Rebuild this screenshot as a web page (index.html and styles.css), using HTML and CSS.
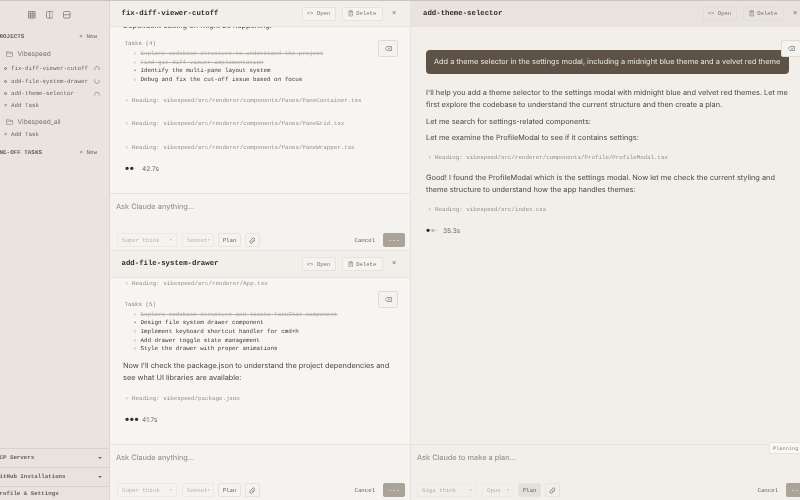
FILE: index.html
```html
<!DOCTYPE html>
<html lang="en">
<head>
<meta charset="utf-8">
<title>Vibespeed</title>
<link rel="stylesheet" href="styles.css">
</head>
<body>
<div class="app">
  <aside class="sidebar">
    <div class="layout-icons">
      <svg class="li" viewBox="0 0 8 8"><path d="M.5.5h7v7h-7zM.5 3h7M.5 5.3h7M2.8.5v7M5.2.5v7"/></svg>
      <svg class="li" viewBox="0 0 8 8"><rect x=".5" y=".5" width="7" height="7" rx="1"/><path d="M4 .5v7"/></svg>
      <svg class="li" viewBox="0 0 8 8"><rect x=".5" y=".5" width="7" height="7" rx="1"/><path d="M.5 4h7"/></svg>
    </div>
    <div class="sec-head"><span>PROJECTS</span><span class="new">+ New</span></div>
    <div class="project"><svg class="folder" viewBox="0 0 8 7"><path d="M.5 1.2c0-.4.3-.7.7-.7h1.6l.8 1h3.2c.4 0 .7.3.7.7v3.6c0 .4-.3.7-.7.7H1.2c-.4 0-.7-.3-.7-.7zM.5 2.6h7"/></svg><span>Vibespeed</span></div>
    <div class="task"><i class="ring"></i><span class="tname">fix-diff-viewer-cutoff</span><svg class="spin" viewBox="0 0 8 8"><path d="M1.2 5.5A3.2 3.2 0 1 1 6.8 5.5"/></svg></div>
    <div class="task"><i class="ring"></i><span class="tname">add-file-system-drawer</span><svg class="spin" viewBox="0 0 8 8"><path d="M6.8 2.5A3.2 3.2 0 1 1 1.5 2"/></svg></div>
    <div class="task"><i class="ring"></i><span class="tname">add-theme-selector</span><svg class="spin" viewBox="0 0 8 8"><path d="M1 6A3.2 3.2 0 1 1 7 6"/></svg></div>
    <div class="add">+ Add Task</div>
    <div class="project second"><svg class="folder" viewBox="0 0 8 7"><path d="M.5 1.2c0-.4.3-.7.7-.7h1.6l.8 1h3.2c.4 0 .7.3.7.7v3.6c0 .4-.3.7-.7.7H1.2c-.4 0-.7-.3-.7-.7zM.5 2.6h7"/></svg><span>Vibespeed_all</span></div>
    <div class="add">+ Add Task</div>
    <div class="sec-head oneoff"><span>ONE-OFF TASKS</span><span class="new">+ New</span></div>
    <div class="foot">
      <div class="foot-row"><span>MCP Servers</span><em class="caret"></em></div>
      <div class="foot-row"><span>GitHub Installations</span><em class="caret"></em></div>
      <div class="foot-row last"><span>Profile &amp; Settings</span></div>
    </div>
  </aside>

  <div class="middle">
    <section class="pane first">
      <header class="head">
        <h2>fix-diff-viewer-cutoff</h2>
        <div class="head-btns">
          <button class="hbtn open">&lt;&gt; Open</button>
          <button class="hbtn del"><svg class="trash" viewBox="0 0 8 9"><path d="M.5 1.7h7M2.7 1.5V.6h2.6v.9M1.3 1.8v6.6h5.4V1.8M2.6 3.6h2.8M2.6 5.6h2.8"/></svg>Delete</button>
          <span class="close">×</span>
        </div>
      </header>
      <div class="msgs">
        <button class="eye"><svg viewBox="0 0 10 7"><path d="M2.8.6h6.6v5.8H2.8L.5 3.5zM4.6 2.2l2.6 2.6M7.2 2.2 4.6 4.8"/></svg></button>
        <p class="para">Dependent cutting off might be happening.</p>
        <div class="tasks-title t1">Tasks (4)</div>
        <ul class="tasks">
          <li class="done"><b>✓</b><s>Explore codebase structure to understand the project</s></li>
          <li class="done"><b>✓</b><s>Find git diff viewer implementation</s></li>
          <li><b>•</b>Identify the multi-pane layout system</li>
          <li><b>○</b>Debug and fix the cut-off issue based on focus</li>
        </ul>
        <div class="reading r1">› Reading: vibespeed/src/renderer/components/Panes/PaneContainer.tsx</div>
        <div class="reading">› Reading: vibespeed/src/renderer/components/Panes/PaneGrid.tsx</div>
        <div class="reading">› Reading: vibespeed/src/renderer/components/Panes/PaneWrapper.tsx</div>
        <div class="status"><span class="dots">●●<u>·</u></span>42.7s</div>
      </div>
      <div class="composer">
        <div class="prompt">Ask Claude anything...</div>
        <div class="tools">
          <span class="sel super">Super think<i>▾</i></span>
          <span class="sel sonnet">Sonnet<i>▾</i></span>
          <span class="tbtn plan">Plan</span>
          <span class="tbtn clip"><svg viewBox="0 0 8 8"><path d="M6.8 3.6 3.8 6.7a1.6 1.6 0 0 1-2.4-2.3l3.1-3.2a1 1 0 0 1 1.5 1.5L3 5.7"/></svg></span>
          <span class="grow"></span>
          <span class="cancel">Cancel</span>
          <span class="send">...</span>
        </div>
      </div>
    </section>

    <section class="pane second-pane">
      <header class="head">
        <h2>add-file-system-drawer</h2>
        <div class="head-btns">
          <button class="hbtn open">&lt;&gt; Open</button>
          <button class="hbtn del"><svg class="trash" viewBox="0 0 8 9"><path d="M.5 1.7h7M2.7 1.5V.6h2.6v.9M1.3 1.8v6.6h5.4V1.8M2.6 3.6h2.8M2.6 5.6h2.8"/></svg>Delete</button>
          <span class="close">×</span>
        </div>
      </header>
      <div class="msgs">
        <button class="eye"><svg viewBox="0 0 10 7"><path d="M2.8.6h6.6v5.8H2.8L.5 3.5zM4.6 2.2l2.6 2.6M7.2 2.2 4.6 4.8"/></svg></button>
        <div class="reading">› Reading: vibespeed/src/renderer/App.tsx</div>
        <div class="tasks-title t2">Tasks (5)</div>
        <ul class="tasks">
          <li class="done"><b>✓</b><s>Explore codebase structure and locate TaskChat component</s></li>
          <li><b>•</b>Design file system drawer component</li>
          <li><b>○</b>Implement keyboard shortcut handler for cmd+h</li>
          <li><b>○</b>Add drawer toggle state management</li>
          <li><b>○</b>Style the drawer with proper animations</li>
        </ul>
        <p class="para p2">Now I'll check the package.json to understand the project dependencies and see what UI libraries are available:</p>
        <div class="reading r3">› Reading: vibespeed/package.json</div>
        <div class="status"><span class="dots">●●●</span>41.7s</div>
      </div>
      <div class="composer low">
        <div class="prompt">Ask Claude anything...</div>
        <div class="tools">
          <span class="sel super">Super think<i>▾</i></span>
          <span class="sel sonnet">Sonnet<i>▾</i></span>
          <span class="tbtn plan">Plan</span>
          <span class="tbtn clip"><svg viewBox="0 0 8 8"><path d="M6.8 3.6 3.8 6.7a1.6 1.6 0 0 1-2.4-2.3l3.1-3.2a1 1 0 0 1 1.5 1.5L3 5.7"/></svg></span>
          <span class="grow"></span>
          <span class="cancel">Cancel</span>
          <span class="send">...</span>
        </div>
      </div>
    </section>
  </div>

  <section class="pane right">
    <header class="head">
      <h2>add-theme-selector</h2>
      <div class="head-btns">
        <button class="hbtn open">&lt;&gt; Open</button>
        <button class="hbtn del"><svg class="trash" viewBox="0 0 8 9"><path d="M.5 1.7h7M2.7 1.5V.6h2.6v.9M1.3 1.8v6.6h5.4V1.8M2.6 3.6h2.8M2.6 5.6h2.8"/></svg>Delete</button>
        <span class="close">×</span>
      </div>
    </header>
    <div class="msgs">
      <button class="eye"><svg viewBox="0 0 10 7"><path d="M2.8.6h6.6v5.8H2.8L.5 3.5zM4.6 2.2l2.6 2.6M7.2 2.2 4.6 4.8"/></svg></button>
      <div class="bubble">Add a theme selector in the settings modal, including a midnight blue theme and a velvet red theme</div>
      <p class="para a1">I'll help you add a theme selector to the settings modal with midnight blue and velvet red themes. Let me first explore the codebase to understand the current structure and then create a plan.</p>
      <p class="para a2">Let me search for settings-related components:</p>
      <p class="para a3">Let me examine the ProfileModal to see if it contains settings:</p>
      <div class="reading r4">› Reading: vibespeed/src/renderer/components/Profile/ProfileModal.tsx</div>
      <p class="para a4">Good! I found the ProfileModal which is the settings modal. Now let me check the current styling and theme structure to understand how the app handles themes:</p>
      <div class="reading r5">› Reading: vibespeed/src/index.css</div>
      <div class="status s3"><span class="dots">●<u>●</u>·</span>35.3s</div>
    </div>
    <div class="composer low">
      <div class="tooltip">Planning</div>
      <div class="prompt">Ask Claude to make a plan...</div>
      <div class="tools">
        <span class="sel giga">Giga think<i>▾</i></span>
        <span class="sel opus">Opus<i>▾</i></span>
        <span class="tbtn plan on">Plan</span>
        <span class="tbtn clip"><svg viewBox="0 0 8 8"><path d="M6.8 3.6 3.8 6.7a1.6 1.6 0 0 1-2.4-2.3l3.1-3.2a1 1 0 0 1 1.5 1.5L3 5.7"/></svg></span>
        <span class="grow"></span>
        <span class="cancel">Cancel</span>
        <span class="send">...</span>
      </div>
    </div>
  </section>
</div>
</body>
</html>
```

FILE: styles.css
```css
* { box-sizing: border-box; }
html, body { margin: 0; height: 100%; overflow: hidden; }
body { background: #f2efea; font-family: "Liberation Mono", monospace; color: #3b3833; text-rendering: geometricPrecision; }
.app { display: flex; width: 812px; height: 500px; border-top: 1px solid #c9c5be; will-change: transform; }
svg { fill: none; stroke: currentColor; display: block; }

.sidebar { width: 110px; flex: none; display: flex; flex-direction: column; background: #e9e5de; border-right: 1px solid #dcd8d1; overflow: hidden; color: #66635c; }
.layout-icons { display: flex; justify-content: center; gap: 10px; padding: 10px 0 0; height: 26px; margin-left: -10px; color: #77746c; }
.li { width: 7.5px; height: 7.5px; stroke-width: .8; }
.sec-head { display: flex; justify-content: space-between; margin-left: -4px; padding: 6px 12px 0 0; font-size: 5.9px; line-height: 8px; font-weight: bold; }
.sec-head .new { font-weight: normal; }
.project { display: flex; align-items: center; gap: 5px; padding-left: 5.5px; margin-top: 8px; height: 9px; font-family: "Inter", sans-serif; font-size: 6.6px; color: #7a776f; }
.project.second { margin-top: 5px; }
.folder { width: 7px; height: 6px; stroke-width: .7; color: #85827a; }
.task { display: flex; align-items: center; height: 12.5px; padding: 0 9px 0 4px; font-size: 5.85px; white-space: nowrap; }
.project + .task { margin-top: 4.5px; }
.ring { width: 3.4px; height: 3.4px; border: .6px solid #77746c; border-radius: 50%; flex: none; margin-right: 3.5px; }
.tname { flex: 1; }
.spin { width: 6px; height: 6px; stroke-width: .8; color: #6e6b63; flex: none; }
.add { font-size: 5.85px; padding-left: 4px; height: 12px; line-height: 12px; }
.project + .add { margin-top: 2.5px; }
.sec-head.oneoff { padding-top: 0; margin-top: 8px; }
.foot { margin-top: auto; background: #e8e4dd; font-size: 5.8px; font-weight: bold; }
.foot-row { display: flex; align-items: center; justify-content: space-between; height: 19px; margin-left: -4px; padding: 0 7px 0 0; border-top: 1px solid #d8d4cc; }
.foot-row.last { height: 14.5px; }
.caret { width: 0; height: 0; border-left: 2px solid transparent; border-right: 2px solid transparent; border-top: 2px solid #6e6b63; }

.middle { width: 301px; flex: none; display: flex; flex-direction: column; border-right: 1px solid #e6e2dc; }
.pane { display: flex; flex-direction: column; min-height: 0; background: #f7f5f2; }
.first { height: 250px; border-bottom: 1px solid #e6e2dc; }
.second-pane { flex: 1; }
.right { flex: 1; background: #f2efea; }
.head { flex: none; height: 26px; display: flex; align-items: center; justify-content: space-between; padding: 0 13.5px 0 11.5px; background: #f2efea; border-bottom: 1px solid #e8e4de; }
.second-pane .head { height: 27px; }
.right .head { background: #e8e4dd; padding: 0 15.5px 0 12px; }
.head h2 { margin: 0; font-size: 7.35px; font-weight: bold; color: #2f2c28; }
.head-btns { display: flex; align-items: center; gap: 6px; }
button { font: inherit; margin: 0; padding: 0; }
.hbtn { display: flex; align-items: center; justify-content: center; gap: 3px; height: 14px; font-size: 5.6px; color: #77746c; background: #f5f3ef; border: .6px solid #e6e2dc; border-radius: 2px; }
.right .hbtn { background: transparent; border-color: #e2ded7; }
.open { width: 34px; }
.del { width: 41px; }
.trash { width: 5.5px; height: 6.5px; stroke-width: .8; }
.close { width: 5px; margin-left: 3px; text-align: center; font-size: 7px; line-height: 8px; color: #66635c; }

.msgs { position: relative; flex: 1; min-height: 0; overflow: hidden; display: flex; flex-direction: column; justify-content: flex-end; padding: 0 13px 19px; }
.right .msgs { justify-content: flex-start; padding: 23px 15px 0; }
.eye { position: absolute; top: 13px; right: 12px; width: 20px; height: 17px; display: flex; align-items: center; justify-content: center; background: #f5f3ef; border: .7px solid #e0dcd5; border-radius: 2px; color: #6e6b63; }
.eye svg { width: 7px; height: 5px; stroke-width: .9; }
.para { margin: 0; font-family: "Inter", sans-serif; font-size: 7.35px; line-height: 12px; color: #4a4741; }
.tasks-title { font-size: 5.85px; line-height: 9px; color: #8a867e; padding-left: 1.5px; }
.t1 { margin-top: 7px; position: static; }
.t2 { margin-top: 12px; }
.tasks { margin: 1.5px 0 0; padding: 0 0 0 10.5px; list-style: none; font-size: 5.87px; line-height: 8.7px; color: #3b3833; }
.tasks li { height: 8.7px; white-space: nowrap; }
.tasks b { display: inline-block; width: 7px; line-height: 0; font-weight: normal; font-size: 5px; color: #6e6b63; }
.tasks .done { color: #b4afa7; }
.tasks .done b { color: #8a867e; }
.reading { font-size: 5.8px; line-height: 8px; color: #918c83; padding-left: 2px; margin-top: 15.7px; white-space: nowrap; }
.msgs > .reading:nth-child(2) { margin-top: 0; }
.reading.r1 { margin-top: 12px; }
.p2 { margin-top: 6px; }
.reading.r3 { margin-top: 11px; }
.status { display: flex; align-items: center; font-size: 6.6px; line-height: 9px; color: #6e6b63; margin-top: 13px; padding-left: 2px; font-family: "Inter", sans-serif; }
.dots { width: 17px; font-size: 4.5px; letter-spacing: .6px; color: #2f2c28; }
.dots u { text-decoration: none; color: #bdb8b0; }
.bubble { align-self: flex-start; background: #5e5145; color: #ece8e1; font-family: "Inter", sans-serif; font-size: 7.4px; line-height: 12px; padding: 6px 8px; border-radius: 4px; width: 363px; white-space: nowrap; }
.a1 { margin-top: 13px; width: 372px; }
.a2 { margin-top: 5px; }
.a3 { margin-top: 3.5px; }
.reading.r4, .reading.r5 { margin-top: 10px; }
.a4 { margin-top: 10px; width: 372px; }
.status.s3 { margin-top: 13.5px; padding-left: 0; }

.composer { position: relative; flex: none; height: 57px; border-top: 1px solid #e6e2dc; background: #f5f3ef; display: flex; flex-direction: column; padding: 0 5px 3px 7px; }
.composer.low { height: 56px; }
.right .composer { background: #f2efea; padding-left: 6px; }
.prompt { font-family: "Inter", sans-serif; font-size: 7.4px; line-height: 12px; color: #8a867e; padding-top: 7px; height: 19px; margin-left: -1px; }
.right .prompt { margin-left: 0; }
.tools { margin-top: auto; display: flex; align-items: center; gap: 4px; height: 14px; font-size: 5.7px; }
.sel { display: flex; align-items: center; justify-content: space-between; height: 14px; padding: 0 4px; color: #b4afa7; border: .6px solid #ece9e4; border-radius: 2px; }
.sel i { font-style: normal; font-size: 4px; }
.super { width: 60px; margin-right: 1px; }
.sonnet { width: 32px; }
.giga { width: 60px; margin-right: 1px; }
.opus { width: 32px; }
.tbtn { display: flex; align-items: center; justify-content: center; height: 14px; border: .6px solid #e6e2dc; border-radius: 2px; color: #5d5a53; }
.plan { width: 23px; }
.plan.on { background: #e4dfd8; }
.clip { width: 15px; color: #77746c; }
.clip svg { width: 7px; height: 7px; stroke-width: .9; }
.grow { flex: 1; }
.cancel { color: #5d5a53; margin-right: 4px; }
.send { width: 22px; height: 13.5px; text-align: center; font-size: 6.5px; font-weight: bold; line-height: 13px; background: #aca398; color: #f2efea; border-radius: 2px; }
.tooltip { position: absolute; top: -3px; left: 358px; width: 40px; height: 12px; padding-left: 3px; font-size: 5.3px; line-height: 12px; color: #8a867e; background: #f8f7f4; border: .5px solid #e6e2dc; }
```
